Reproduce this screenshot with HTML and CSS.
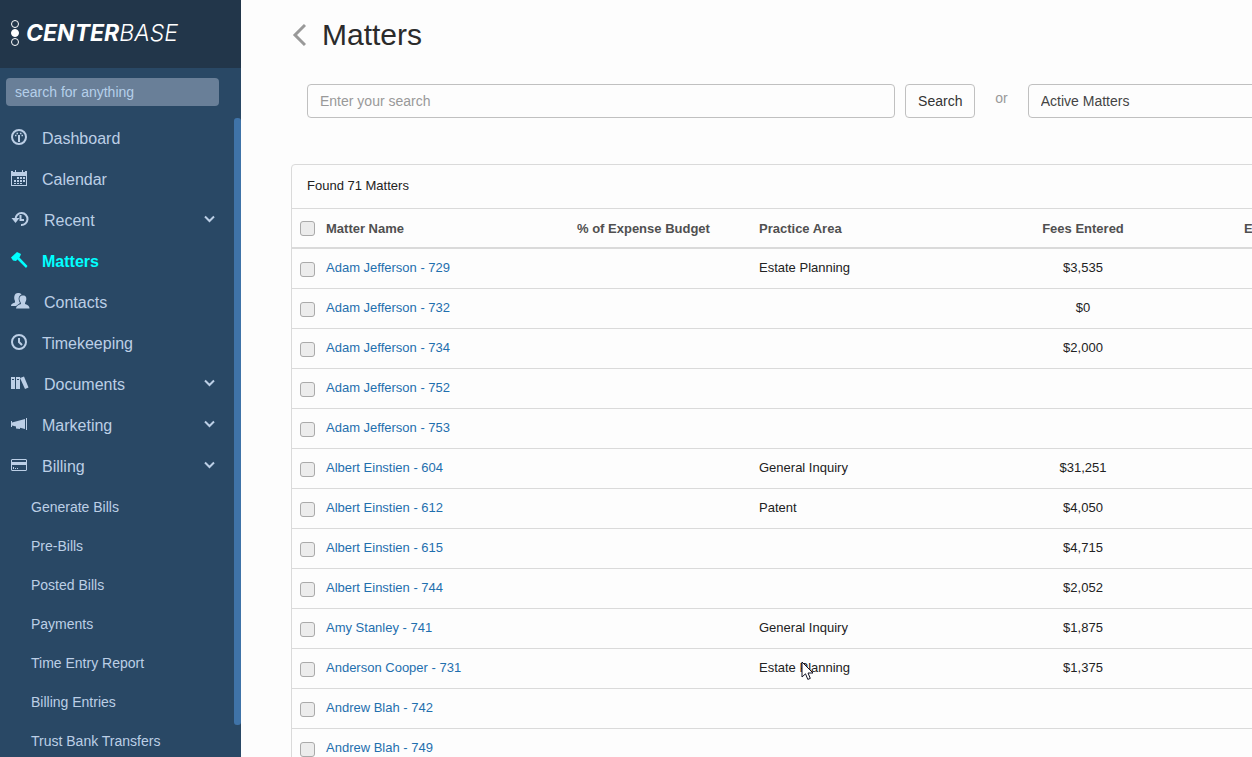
FILE: index.html
```html
<!DOCTYPE html>
<html lang="en">
<head>
  <meta charset="UTF-8" />
  <title>Matters - Centerbase</title>
  <link rel="stylesheet" href="styles.css">
</head>
<body>
  <aside class="sidebar">
    <a href="#" class="logo">
      <svg width="12" height="28" viewBox="0 0 12 28" fill="none" stroke="#fff">
        <circle cx="6" cy="5" r="3.5" />
        <circle cx="6" cy="14" r="3.5" fill="#fff" />
        <circle cx="6" cy="23" r="3.5" />
      </svg>
      <span class="logo-text"><b>CENTER</b>BASE</span>
    </a>
    <div class="sidebar-search">
      <input type="text" placeholder="search for anything" aria-label="Search for anything" />
    </div>
    <nav class="nav">
      <a href="#" class="nav-item">
        <svg class="icon" viewBox="0 0 17 17" fill="none" stroke="currentColor">
          <circle cx="8" cy="8" r="7" stroke-width="2" />
          <path d="M8 6v7" stroke-width="2" />
          <path d="M4 6.5h1.5M10.5 6.500h1.5M5.5 4.500h1.5M9 4.500h1.5" stroke-width="1.3" />
        </svg>
        <span>Dashboard</span>
      </a>
      <a href="#" class="nav-item">
        <svg class="icon" viewBox="0 0 17 17" fill="currentColor">
          <path d="M0 1h2v1h2V0h1v2h6V0h1v2h2V1h2v15H0zM1 6v9h14V6z" fill-rule="evenodd" />
          <path d="M6 7h2v2H6zM9 7h2v2H9zM12 7h2v2h-2zM3 10h2v2H3zM6 10h2v2H6zM9 10h2v2H9zM12 10h2v2h-2zM3 13h2v1H3zM6 13h2v1H6zM9 13h2v1H9z" />
        </svg>
        <span>Calendar</span>
      </a>
      <a href="#" class="nav-item">
        <svg class="icon wide" viewBox="0 0 19 17" fill="none" stroke="currentColor" stroke-width="2">
          <path d="M4.5 8a6 6 0 1 1 5.500 6" />
          <path d="M9.5 4v5H13" stroke-width="2" />
          <path d="M0.500 7h8L4.500 12z" fill="currentColor" stroke="none" />
        </svg>
        <span>Recent</span>
        <svg class="arrow" viewBox="0 0 11 8"><path d="M1 1.500l4.500 4.500L10 1.500" /></svg>
      </a>
      <a href="#" class="nav-item active">
        <svg class="icon" viewBox="0 0 17 17" fill="currentColor">
          <path d="M0 5.500L6 0l4 2-1 2.500L5 9 2 8.500z" />
          <path d="M5.500 6.500L7.500 4.500l9 9.500-1.500 2z" />
        </svg>
        <span>Matters</span>
      </a>
      <a href="#" class="nav-item">
        <svg class="icon wide" viewBox="0 0 19 17" fill="currentColor">
          <path d="M7 0c2 0 3 .5 3.500 1.500C8 2.500 7 5 8 8l1 2-4 3H0c0-2 1-2.500 4-3.500V8C2.500 5 3 0 7 0z" />
          <path d="M12 2.500c3 0 3.500 2 3.300 4-.2 2-1.300 2.500-1.300 4.500 3 1 4.500 2 4.500 4.500H5c0-2.500 2-3.500 5-4.500 0-2-1.300-2.500-1.500-4.500-.2-2 .5-4 3.500-4z" />
        </svg>
        <span>Contacts</span>
      </a>
      <a href="#" class="nav-item">
        <svg class="icon" viewBox="0 0 17 17" fill="none" stroke="currentColor" stroke-width="2">
          <circle cx="8" cy="8" r="7" />
          <path d="M8 4v4l3 3" />
        </svg>
        <span>Timekeeping</span>
      </a>
      <a href="#" class="nav-item">
        <svg class="icon wide" viewBox="0 0 19 17" fill="currentColor">
          <path d="M0 2h4v12H0zM1 4v1h2V4zM5 2h4v12H5zM6 4v1h2V4z" fill-rule="evenodd" />
          <path d="M9 3l4-1.500 4.500 11-3.500 1.500z" />
        </svg>
        <span>Documents</span>
        <svg class="arrow" viewBox="0 0 11 8"><path d="M1 1.500l4.500 4.500L10 1.500" /></svg>
      </a>
      <a href="#" class="nav-item">
        <svg class="icon" viewBox="0 0 17 17" fill="currentColor">
          <path d="M0 5h1v1.500L14 3v10l-5-1.300V13l-4-.5V10.500L1 9.500V11H0zM15 2h1v12h-1z" />
        </svg>
        <span>Marketing</span>
        <svg class="arrow" viewBox="0 0 11 8"><path d="M1 1.500l4.500 4.500L10 1.500" /></svg>
      </a>
      <a href="#" class="nav-item">
        <svg class="icon" viewBox="0 0 17 17" fill="currentColor">
          <path d="M1 2h14l1 1v10l-1 1H1l-1-1V3zM1 3v2h14V3zM1 8v5h14V8z" fill-rule="evenodd" />
          <path d="M2 10h1v2H2zM4 11h1v1H4zM6 11h1v1H6z" />
        </svg>
        <span>Billing</span>
        <svg class="arrow" viewBox="0 0 11 8"><path d="M1 1.500l4.500 4.500L10 1.500" /></svg>
      </a>
      <div class="sub-nav">
        <a href="#" class="sub-item">Generate Bills</a>
        <a href="#" class="sub-item">Pre-Bills</a>
        <a href="#" class="sub-item">Posted Bills</a>
        <a href="#" class="sub-item">Payments</a>
        <a href="#" class="sub-item">Time Entry Report</a>
        <a href="#" class="sub-item">Billing Entries</a>
        <a href="#" class="sub-item">Trust Bank Transfers</a>
      </div>
      <div class="scroll-thumb"></div>
    </nav>
  </aside>

  <main class="main">
    <div class="content">
      <div class="page-title">
        <a href="#" class="back" aria-label="Back">
          <svg width="15" height="24" viewBox="0 0 15 24" fill="none" stroke="#999" stroke-width="3"><path d="M14 2L4 12l10 10" /></svg>
        </a>
        <h1>Matters</h1>
      </div>

      <form class="search-form">
        <input type="text" placeholder="Enter your search" aria-label="Enter your search" />
        <button type="button">Search</button>
        <span class="or">or</span>
        <select aria-label="Matter filter">
          <option>Active Matters</option>
        </select>
      </form>

      <section class="panel">
        <div class="panel-heading">Found 71 Matters</div>
        <table>
          <colgroup>
            <col class="col-check"><col class="col-name"><col class="col-budget"><col class="col-area"><col class="col-fees"><col>
          </colgroup>
          <thead>
            <tr>
              <th class="check"><input type="checkbox" aria-label="Select all" /></th>
              <th>Matter Name</th>
              <th>% of Expense Budget</th>
              <th>Practice Area</th>
              <th class="amount">Fees Entered</th>
              <th class="expenses">Expenses Entered</th>
            </tr>
          </thead>
          <tbody>
            <tr>
              <td class="check"><input type="checkbox" aria-label="Adam Jefferson - 729" /></td>
              <td><a href="#">Adam Jefferson - 729</a></td><td></td>
              <td>Estate Planning</td><td class="amount">$3,535</td><td></td>
            </tr>
            <tr>
              <td class="check"><input type="checkbox" aria-label="Adam Jefferson - 732" /></td>
              <td><a href="#">Adam Jefferson - 732</a></td><td></td>
              <td></td><td class="amount">$0</td><td></td>
            </tr>
            <tr>
              <td class="check"><input type="checkbox" aria-label="Adam Jefferson - 734" /></td>
              <td><a href="#">Adam Jefferson - 734</a></td><td></td>
              <td></td><td class="amount">$2,000</td><td></td>
            </tr>
            <tr>
              <td class="check"><input type="checkbox" aria-label="Adam Jefferson - 752" /></td>
              <td><a href="#">Adam Jefferson - 752</a></td><td></td>
              <td></td><td class="amount"></td><td></td>
            </tr>
            <tr>
              <td class="check"><input type="checkbox" aria-label="Adam Jefferson - 753" /></td>
              <td><a href="#">Adam Jefferson - 753</a></td><td></td>
              <td></td><td class="amount"></td><td></td>
            </tr>
            <tr>
              <td class="check"><input type="checkbox" aria-label="Albert Einstien - 604" /></td>
              <td><a href="#">Albert Einstien - 604</a></td><td></td>
              <td>General Inquiry</td><td class="amount">$31,251</td><td></td>
            </tr>
            <tr>
              <td class="check"><input type="checkbox" aria-label="Albert Einstien - 612" /></td>
              <td><a href="#">Albert Einstien - 612</a></td><td></td>
              <td>Patent</td><td class="amount">$4,050</td><td></td>
            </tr>
            <tr>
              <td class="check"><input type="checkbox" aria-label="Albert Einstien - 615" /></td>
              <td><a href="#">Albert Einstien - 615</a></td><td></td>
              <td></td><td class="amount">$4,715</td><td></td>
            </tr>
            <tr>
              <td class="check"><input type="checkbox" aria-label="Albert Einstien - 744" /></td>
              <td><a href="#">Albert Einstien - 744</a></td><td></td>
              <td></td><td class="amount">$2,052</td><td></td>
            </tr>
            <tr>
              <td class="check"><input type="checkbox" aria-label="Amy Stanley - 741" /></td>
              <td><a href="#">Amy Stanley - 741</a></td><td></td>
              <td>General Inquiry</td><td class="amount">$1,875</td><td></td>
            </tr>
            <tr>
              <td class="check"><input type="checkbox" aria-label="Anderson Cooper - 731" /></td>
              <td><a href="#">Anderson Cooper - 731</a></td><td></td>
              <td class="hovered">Estate Planning
                <svg class="cursor" width="13" height="20" viewBox="0 0 13 20"><path d="M1 1v15l3.500-3.200 2.300 5.600 2.500-1-2.300-5.400H12z" fill="#fff" stroke="#112" /></svg>
              </td><td class="amount">$1,375</td><td></td>
            </tr>
            <tr>
              <td class="check"><input type="checkbox" aria-label="Andrew Blah - 742" /></td>
              <td><a href="#">Andrew Blah - 742</a></td><td></td>
              <td></td><td class="amount"></td><td></td>
            </tr>
            <tr>
              <td class="check"><input type="checkbox" aria-label="Andrew Blah - 749" /></td>
              <td><a href="#">Andrew Blah - 749</a></td><td></td>
              <td></td><td class="amount"></td><td></td>
            </tr>
          </tbody>
        </table>
      </section>
    </div>
  </main>
</body>
</html>
```
FILE: styles.css
```css
* { box-sizing: border-box; }
body {
  display: flex;
  height: 100vh;
  margin: 0;
  overflow: hidden;
  background: #fdfdfd;
  color: #222;
  font-family: "Liberation Sans", Arial, sans-serif;
  font-size: 14px;
}
a { text-decoration: none; }
input, button, select { font-family: inherit; font-size: 14px; }

/* Sidebar */
.sidebar {
  display: flex;
  flex-direction: column;
  flex: none;
  width: 241px;
  background: #294865;
  overflow: hidden;
}
.logo {
  display: flex;
  flex: none;
  align-items: center;
  gap: 5px;
  height: 68px;
  padding: 0 9px 2px;
  background: #22364a;
  color: #fff;
}
.logo-text {
  font-family: Inter, sans-serif;
  font-size: 23px;
  font-style: italic;
  font-weight: 300;
}
.logo-text b { font-weight: 700; }
.sidebar-search { flex: none; padding: 10px 22px 12px 6px; }
.sidebar-search input {
  display: block;
  width: 100%;
  height: 28px;
  padding: 0 9px;
  border: none;
  border-radius: 4px;
  background: #697f98;
  color: #fff;
}
.sidebar-search input::placeholder { color: #b5cfea; }
.nav {
  position: relative;
  flex: 1;
  min-height: 0;
  overflow: hidden;
}
.nav-item {
  display: flex;
  align-items: center;
  gap: 14px;
  height: 41px;
  padding: 0 26px 0 11px;
  color: #bccfe6;
  font-size: 16px;
}
.nav-item.active { color: #0ff; font-weight: bold; }
.icon { flex: none; width: 17px; height: 17px; margin-bottom: 2px; }
.icon.wide { width: 19px; }
.arrow {
  width: 11px;
  height: 8px;
  margin: 0 0 3px auto;
  fill: none;
  stroke: #bccfe6;
  stroke-width: 2;
}
.sub-nav { padding-top: 1px; }
.sub-item {
  display: block;
  padding-left: 31px;
  line-height: 39px;
  color: #bccfe6;
}
.scroll-thumb {
  position: absolute;
  top: 0;
  right: 0;
  width: 7px;
  height: 95%;
  border-radius: 3px;
  background: #3f73a8;
}

/* Main area, wide content runs past the window edge */
.main { flex: 1; min-width: 0; overflow: hidden; }
.content { min-width: 1391px; padding: 17px 16px 0 50px; }
.page-title { display: flex; align-items: center; gap: 16px; }
.back { display: flex; }
h1 {
  margin: 0;
  font-size: 30px;
  font-weight: normal;
  line-height: 36px;
  color: #2b2b2b;
}
.search-form {
  display: flex;
  margin: 31px 0 46px;
  padding-left: 16px;
}
.search-form input, .search-form select {
  flex: 1;
  min-width: 0;
  height: 34px;
  padding: 0 12px;
  border: 1px solid #c0c0c0;
  border-radius: 4px;
  background: #fdfdfd;
  color: #444;
}
.search-form select { appearance: none; }
.search-form input::placeholder { color: #999; }
.search-form button {
  width: 70px;
  margin-left: 10px;
  border: 1px solid #c0c0c0;
  border-radius: 4px;
  background: #fdfdfd;
  color: #333;
}
.or { margin: 0 20px; line-height: 28px; color: #999; }

/* Matters table */
.panel {
  border: 1px solid #dadada;
  border-radius: 4px;
  font-size: 13px;
}
.panel-heading {
  padding: 0 15px 2px;
  line-height: 41px;
  border-bottom: 1px solid #dadada;
}
table {
  width: 100%;
  table-layout: fixed;
  border-collapse: separate;
  border-spacing: 0;
}
.col-check { width: 34px; }
.col-name { width: 251px; }
.col-budget { width: 182px; }
.col-area { width: 233px; }
.col-fees { width: 182px; }
th {
  height: 40px;
  padding: 0;
  border-bottom: 2px solid #dadada;
  color: #505050;
  text-align: left;
}
td {
  height: 40px;
  padding: 10px 0 0;
  border-bottom: 1px solid #dadada;
  line-height: 18px;
  vertical-align: top;
}
td a { color: #1f6fae; }
.amount { text-align: center; }
.expenses { padding-left: 70px; }
.check { padding-left: 8px; }
td.check { padding-top: 13px; }
.check input {
  display: block;
  appearance: none;
  width: 15px;
  height: 15px;
  margin: 0;
  border: 1px solid #aaa;
  border-radius: 3px;
  background: #ececec;
}
.hovered { position: relative; }
.cursor { position: absolute; top: 12px; left: 42px; }
```
